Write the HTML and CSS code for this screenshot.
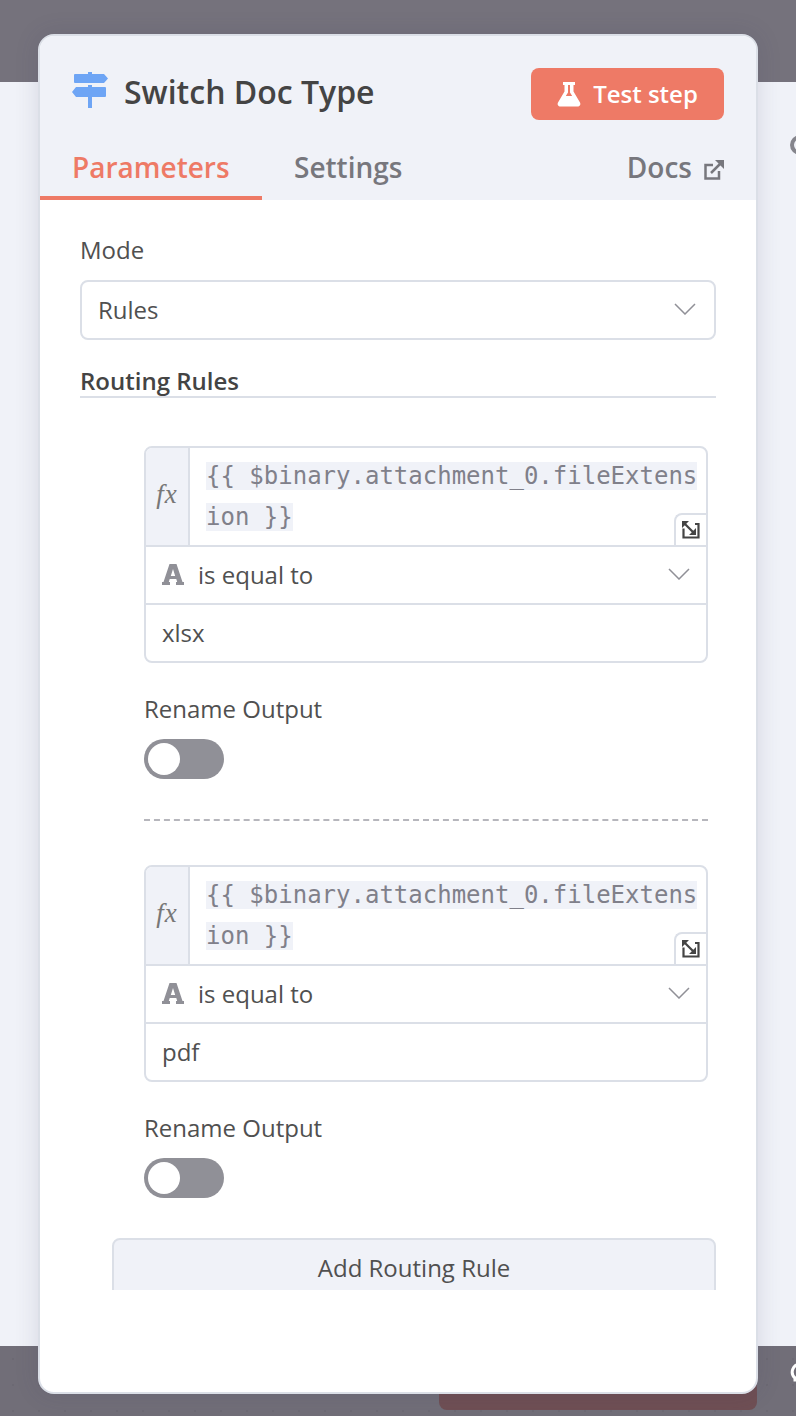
FILE: index.html
```html
<!DOCTYPE html>
<html lang="en">
<head>
<meta charset="utf-8">
<title>Switch Doc Type</title>
<link rel="stylesheet" href="styles.css">
</head>
<body>
<div class="backdrop">
  <div class="band band-top"></div>
  <div class="canvas"></div>
  <div class="band band-bottom"></div>
</div>
<span class="peek-ring"></span>
<svg class="peek-bulb" viewBox="0 0 20 24" width="20" height="24"><path d="M10 2a8 8 0 0 0-5 14v2h10v-2a8 8 0 0 0-5-14z" fill="none" stroke="#fff" stroke-width="3"/><rect x="6" y="20" width="8" height="3" fill="#fff"/></svg>
<div class="under-bar"></div>
<main class="modal">
  <header class="head">
    <div class="title-row">
      <div class="title">
        <svg class="sign" viewBox="0 0 36 36" width="36" height="36"><path fill="#6ea5f5" d="M16 0h4v2h12l4 4.500-4 4.500H3a1 1 0 0 1-1-1V3a1 1 0 0 1 1-1h13z"/><path fill="#6ea5f5" d="M16 13h4v2h13a1 1 0 0 1 1 1v8a1 1 0 0 1-1 1H20v11h-4V25H4l-4-5 4-5h12z"/></svg>
        <h1>Switch Doc Type</h1>
      </div>
      <button class="test-btn">
        <svg viewBox="0 0 24 26" width="24" height="26"><path fill="#fff" d="M6 1h12v3h-1.500v6.500L23 21.500c1 2-.2 4-2.500 4h-17c-2.300 0-3.500-2-2.500-4l6.500-11V4H6zm5 3v7.500L8.800 15h6.400L13 11.500V4z"/></svg>
        <span>Test step</span>
      </button>
    </div>
    <nav class="tabs">
      <a class="tab tab-active">Parameters</a>
      <a class="tab">Settings</a>
      <a class="tab tab-docs">Docs
        <svg viewBox="0 0 20 20" width="20" height="20"><path fill="none" stroke="#77777d" stroke-width="2.500" d="M9 5H1.500v13.500H15V11"/><path fill="none" stroke="#77777d" stroke-width="2.500" d="M7 13 17 3"/><path fill="#77777d" d="M11 0h9v9z"/></svg>
      </a>
    </nav>
  </header>
  <section class="body">
    <label class="label">Mode</label>
    <div class="select">
      <span>Rules</span>
      <svg class="chev" viewBox="0 0 22 12" width="22" height="12"><path fill="none" stroke="#909097" stroke-width="1.500" d="M1 1l10 10L21 1"/></svg>
    </div>
    <div class="section-title">Routing Rules</div>
    <div class="rules">
      <div class="rule">
        <div class="cond">
          <div class="expr">
            <div class="fx">fx</div>
            <div class="code"><span>{{ $binary.attachment_0.fileExtens<br>ion }}</span>
              <div class="expand"><svg viewBox="0 0 18 18" width="18" height="18"><path fill="none" stroke="#444" stroke-width="2.200" d="M1.500 7.500V16.500H16.500V3H13"/><path fill="none" stroke="#444" stroke-width="2.200" d="M3 3 12 12"/><path fill="#444" d="M0 0h7L0 7zM14 14H7l7-7z"/></svg></div>
            </div>
          </div>
          <div class="op">
            <svg class="type-a" viewBox="0 0 22 21" width="22" height="21"><path fill="#909097" fill-rule="evenodd" d="M7.500 0h7l6 18H22v3h-8v-3h1.200l-.9-3H7.700l-.9 3H8v3H0v-3h1.500zM11 5 8.800 12h4.400z"/></svg>
            <span class="op-text">is equal to</span>
            <svg class="chev" viewBox="0 0 22 12" width="22" height="12"><path fill="none" stroke="#909097" stroke-width="1.500" d="M1 1l10 10L21 1"/></svg>
          </div>
          <div class="value">xlsx</div>
        </div>
        <label class="label label-rename">Rename Output</label>
        <div class="switch"><i></i></div>
      </div>
      <div class="rule rule-next">
        <div class="cond">
          <div class="expr">
            <div class="fx">fx</div>
            <div class="code"><span>{{ $binary.attachment_0.fileExtens<br>ion }}</span>
              <div class="expand"><svg viewBox="0 0 18 18" width="18" height="18"><path fill="none" stroke="#444" stroke-width="2.200" d="M1.500 7.500V16.500H16.500V3H13"/><path fill="none" stroke="#444" stroke-width="2.200" d="M3 3 12 12"/><path fill="#444" d="M0 0h7L0 7zM14 14H7l7-7z"/></svg></div>
            </div>
          </div>
          <div class="op">
            <svg class="type-a" viewBox="0 0 22 21" width="22" height="21"><path fill="#909097" fill-rule="evenodd" d="M7.500 0h7l6 18H22v3h-8v-3h1.200l-.9-3H7.700l-.9 3H8v3H0v-3h1.500zM11 5 8.800 12h4.400z"/></svg>
            <span class="op-text">is equal to</span>
            <svg class="chev" viewBox="0 0 22 12" width="22" height="12"><path fill="none" stroke="#909097" stroke-width="1.500" d="M1 1l10 10L21 1"/></svg>
          </div>
          <div class="value">pdf</div>
        </div>
        <label class="label label-rename">Rename Output</label>
        <div class="switch"><i></i></div>
      </div>
    </div>
    <div class="add-btn">Add Routing Rule</div>
  </section>
</main>
</body>
</html>
```
FILE: styles.css
```css
* { box-sizing: border-box; }
html, body { margin: 0; height: 1416px; overflow: hidden; }
body { font-family: "Open Sans", sans-serif; color: #444; background: #f0f2f8; }
.backdrop { display: flex; flex-direction: column; height: 1416px; }
.band { background-color: #75727c; }
.band-top { height: 82px; }
.band-bottom { height: 70px; background-color: #716e78; background-image: radial-gradient(circle, #6c6973 1px, transparent 1.300px); background-size: 26px 26px; }
.canvas { flex: 1; background: #f0f2f8; }
.peek-ring { position: absolute; left: 790px; top: 135px; width: 20px; height: 20px; border: 4px solid #85858c; border-radius: 50%; }
.peek-bulb { position: absolute; left: 790px; top: 1362px; }
.under-bar { position: absolute; left: 439px; top: 1380px; width: 318px; height: 30px; background: #6f4f54; border-radius: 8px; }
.modal { position: absolute; left: 38px; top: 34px; width: 720px; height: 1360px; background: #fff; border: 2px solid #dbdfe7; border-radius: 16px; overflow: hidden; box-shadow: 0 0 24px rgba(60, 60, 90, .14); }
.head { background: #f0f2f8; height: 164px; display: flex; flex-direction: column; }
.title-row { display: flex; justify-content: space-between; align-items: flex-start; padding: 32px 32px 0 32px; height: 84px; }
.title { display: flex; align-items: flex-start; gap: 16px; }
.sign { display: block; margin-top: 4px; }
h1 { margin: 4px 0 0; font-size: 32px; font-weight: 600; line-height: 40px; color: #444; }
.test-btn { display: flex; align-items: center; justify-content: center; gap: 12px; width: 193px; height: 52px; border: 0; border-radius: 8px; background: #ee7a66; color: #fff; font: 600 24px "Open Sans", sans-serif; padding: 0; }
.test-btn span { margin-top: -2px; }
.tabs { display: flex; padding: 0; margin-top: auto; height: 48px; align-items: flex-start; }
.tab { font-size: 28px; font-weight: 600; color: #77777d; line-height: 30px; }
.tab-active { color: #ee7a66; width: 222px; height: 48px; padding-left: 32px; border-bottom: 4px solid #ee7a66; flex: none; }
.tab:nth-child(2) { margin-left: 32px; }
.tab-docs { margin-left: auto; margin-right: 32px; display: flex; align-items: flex-start; gap: 12px; }
.tab-docs svg { margin-top: 8px; }
.body { padding: 34px 40px 0 40px; height: 1090px; overflow: hidden; position: relative; }
.label { display: block; font-size: 24px; line-height: 32px; color: #505050; }
.select { margin-top: 14px; height: 60px; border: 2px solid #dbdfe7; border-radius: 8px; display: flex; align-items: center; justify-content: space-between; padding: 0 18px 2px 16px; font-size: 24px; color: #505050; }
.section-title { margin-top: 26px; height: 32px; font-size: 24px; line-height: 30px; font-weight: 600; color: #444; border-bottom: 2px solid #dbdfe7; }
.rules { padding: 48px 8px 0 64px; }
.cond { width: 564px; border: 2px solid #dbdfe7; border-radius: 8px; overflow: hidden; }
.expr { display: flex; height: 99px; border-bottom: 2px solid #dbdfe7; }
.fx { width: 44px; flex: none; background: #f0f2f8; border-right: 2px solid #dbdfe7; font: italic 27px/92px "Liberation Serif", serif; letter-spacing: 1px; color: #777; text-align: center; }
.code { flex: 1; position: relative; padding: 8px 0 0 16px; font: 24px/41px "DejaVu Sans Mono", monospace; color: #80808a; white-space: nowrap; }
.code span { background: #f0f2f8; -webkit-box-decoration-break: clone; box-decoration-break: clone; }
.expand { position: absolute; right: 0; bottom: 0; width: 32px; height: 32px; background: #fff; border: 2px solid #dbdfe7; border-right: 0; border-bottom: 0; border-top-left-radius: 8px; display: flex; align-items: center; justify-content: center; }
.op { height: 58px; border-bottom: 2px solid #dbdfe7; display: flex; align-items: center; padding: 0 16px 2px 16px; font-size: 24px; color: #505050; }
.type-a { flex: none; margin-right: 14px; }
.op-text { flex: 1; }
.value { height: 56px; padding-left: 16px; font-size: 24px; line-height: 56px; color: #505050; }
.label-rename { margin-top: 30px; }
.switch { margin-top: 14px; width: 80px; height: 40px; border-radius: 20px; background: #909097; padding: 4px; }
.switch i { display: block; width: 32px; height: 32px; border-radius: 50%; background: #fff; }
.rule-next { border-top: 2px dashed #b6b6bc; margin-top: 40px; padding-top: 44px; }
.add-btn { margin: 40px 0 0 32px; height: 60px; background: #f0f2f8; border: 2px solid #dbdfe7; border-radius: 8px; text-align: center; font-size: 24px; line-height: 56px; color: #505050; }
```
